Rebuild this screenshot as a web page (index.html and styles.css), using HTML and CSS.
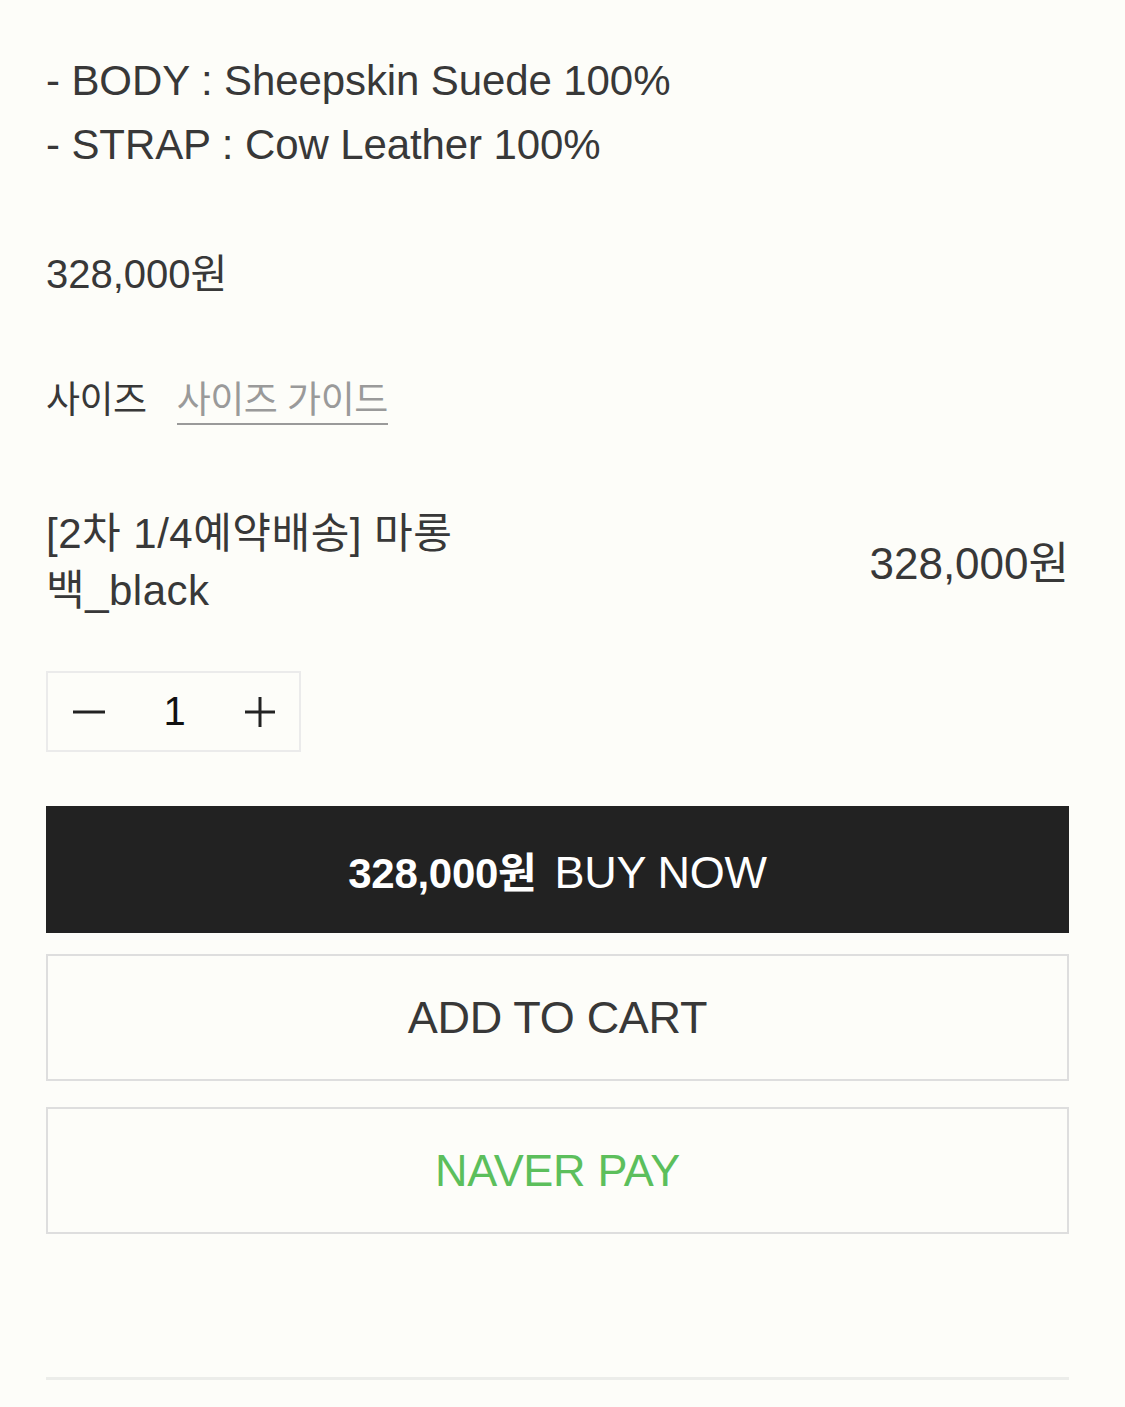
FILE: index.html
```html
<!DOCTYPE html>
<html lang="ko">
<head>
<meta charset="utf-8">
<title>마롱백</title>
<link rel="stylesheet" href="styles.css">
</head>
<body>
<div class="page">
  <div class="specs">
    <p>- BODY : Sheepskin Suede 100%</p>
    <p>- STRAP : Cow Leather 100%</p>
  </div>
  <div class="price">328,000원</div>
  <div class="size-row">
    <span class="size-label">사이즈</span>
    <span class="size-guide">사이즈 가이드</span>
  </div>
  <div class="option">
    <div class="option-name">[2차 1/4예약배송] 마롱 <span class="nowrap">백_black</span></div>
    <div class="option-price">328,000원</div>
  </div>
  <div class="qty">
    <span class="qty-btn"><svg width="34" height="34" viewBox="0 0 34 34"><line x1="1" y1="17" x2="33" y2="17" stroke="#222" stroke-width="3"/></svg></span>
    <span class="qty-num">1</span>
    <span class="qty-btn"><svg width="34" height="34" viewBox="0 0 34 34"><line x1="2" y1="17" x2="32" y2="17" stroke="#222" stroke-width="3"/><line x1="17" y1="2" x2="17" y2="32" stroke="#222" stroke-width="3"/></svg></span>
  </div>
  <div class="buttons">
    <button class="btn btn-buy"><b>328,000원</b> BUY NOW</button>
    <button class="btn btn-cart">ADD TO CART</button>
    <button class="btn btn-naver">NAVER PAY</button>
  </div>
  <div class="divider"></div>
</div>
</body>
</html>
```
FILE: styles.css
```css
html, body {
  margin: 0;
  padding: 0;
  background: #fdfdf9;
}
body {
  font-family: "Liberation Sans", Arial, "Noto Sans CJK KR", sans-serif;
  color: #383838;
}
.page {
  padding: 49px 56px 0 46px;
}
.specs p {
  margin: 0;
  font-size: 42px;
  line-height: 64px;
  letter-spacing: -0.1px;
}
.price {
  margin-top: 72px;
  font-size: 40px;
  line-height: 50px;
}
.size-row {
  margin-top: 78px;
  display: flex;
  align-items: flex-start;
  gap: 30px;
  font-family: "Noto Sans CJK KR", sans-serif;
  font-size: 37px;
  line-height: 40px;
  letter-spacing: -0.5px;
}
.size-guide {
  color: #9a9a9a;
  padding-bottom: 6px;
  border-bottom: 2px solid #9a9a9a;
}
.option {
  margin-top: 80px;
  display: flex;
  justify-content: space-between;
  align-items: center;
}
.option-name {
  width: 480px;
  font-size: 42px;
  line-height: 57px;
  letter-spacing: 0.5px;
}
.nowrap {
  white-space: nowrap;
}
.option-price {
  font-size: 44px;
  padding-bottom: 4px;
}
.qty {
  margin-top: 52px;
  height: 77px;
  width: 205px;
  border: 2px solid #ebebeb;
  display: flex;
  align-items: center;
  padding: 0 22px 0 24px;
  box-sizing: content-box;
  justify-content: space-between;
}
.qty-btn {
  display: flex;
}
.qty-num {
  font-size: 40px;
  color: #111;
}
.buttons {
  margin-top: 54px;
  display: flex;
  flex-direction: column;
}
.btn {
  display: block;
  width: 100%;
  font-family: "Liberation Sans", Arial, "Noto Sans CJK KR", sans-serif;
  font-size: 45px;
  letter-spacing: -0.3px;
  text-align: center;
  margin: 0;
  padding: 0;
  cursor: pointer;
}
.btn-buy {
  height: 127px;
  background: #222;
  color: #fff;
  border: none;
}
.btn-buy b {
  font-size: 42px;
  margin-right: 6px;
}
.btn-cart {
  margin-top: 21px;
  height: 127px;
  background: #fdfdf9;
  border: 2px solid #dedede;
  color: #383838;
}
.btn-naver {
  margin-top: 26px;
  height: 127px;
  background: #fdfdf9;
  border: 2px solid #dedede;
  color: #5cbf5c;
}
.divider {
  margin-top: 143px;
  height: 3px;
  background: #ecedea;
}
```
